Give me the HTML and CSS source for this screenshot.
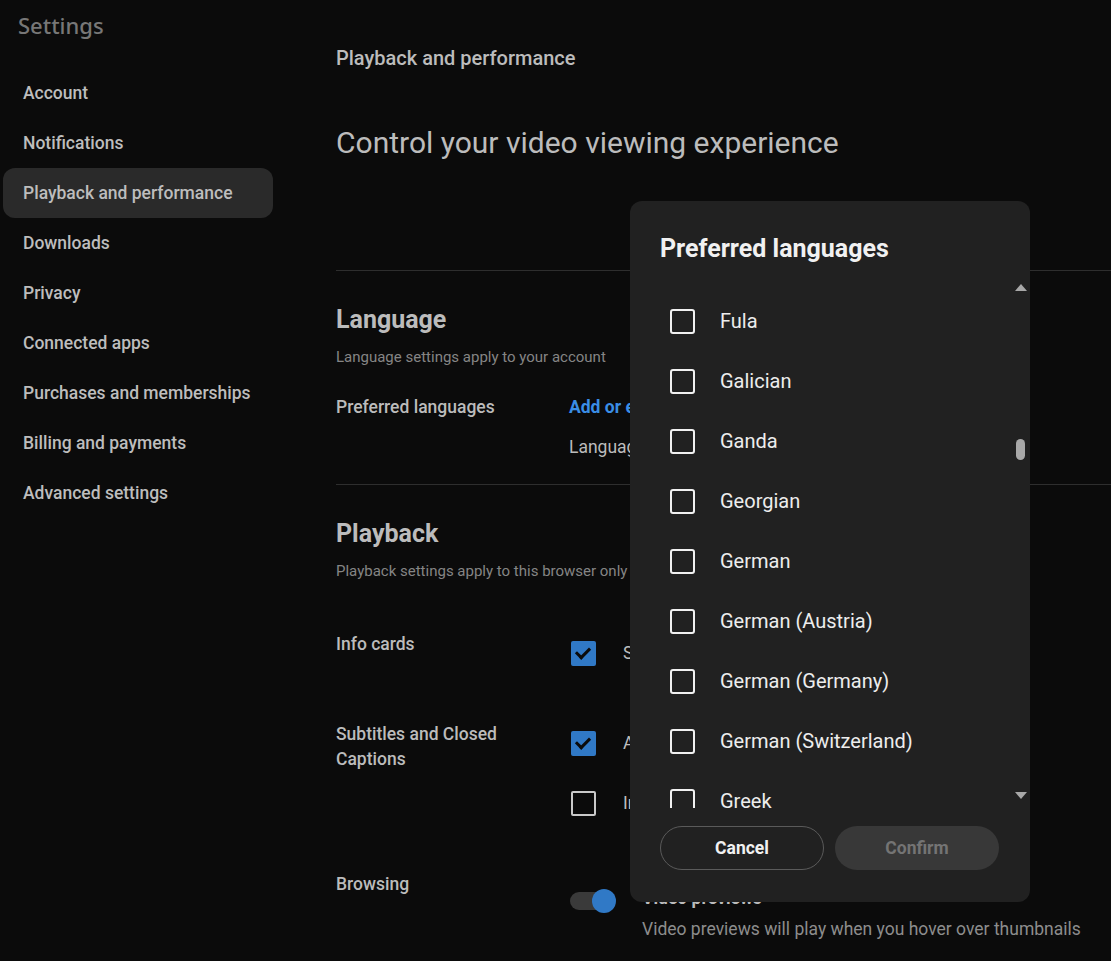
FILE: index.html
```html
<!DOCTYPE html>
<html lang="en">

<head>
  <meta charset="UTF-8">
  <meta name="viewport" content="width=device-width, initial-scale=1.0">
  <title>Settings</title>
  <link rel="stylesheet" href="styles.css">
</head>

<body>
  <div class="page">
    <div class="sidebar">
      <div class="brand">Settings</div>
      <div class="nav">
        <div class="nav-item">Account</div>
        <div class="nav-item">Notifications</div>
        <div class="nav-item active">Playback and performance</div>
        <div class="nav-item">Downloads</div>
        <div class="nav-item">Privacy</div>
        <div class="nav-item">Connected apps</div>
        <div class="nav-item">Purchases and memberships</div>
        <div class="nav-item">Billing and payments</div>
        <div class="nav-item">Advanced settings</div>
      </div>
    </div>

    <div class="main">
      <div class="page-title">Playback and performance</div>
      <div class="page-heading">Control your video viewing experience</div>

      <hr class="divider divider-top">

      <div class="section">
        <div class="section-title">Language</div>
        <div class="section-sub">Language settings apply to your account</div>
        <div class="row row-lang">
          <div class="row-label">Preferred languages</div>
          <div class="row-body">
            <div class="link">Add or edit languages</div>
            <div class="lang-value">Languages: English</div>
          </div>
        </div>
      </div>

      <hr class="divider">

      <div class="section">
        <div class="section-title">Playback</div>
        <div class="section-sub">Playback settings apply to this browser only</div>

        <div class="row row-first">
          <div class="row-label">Info cards</div>
          <div class="row-body">
            <div class="option">
              <span class="check on"></span>
              <span class="option-text">Show info cards on videos</span>
            </div>
          </div>
        </div>

        <div class="row">
          <div class="row-label">Subtitles and Closed<br>Captions</div>
          <div class="row-body">
            <div class="option">
              <span class="check on"></span>
              <span class="option-text">Always show captions</span>
            </div>
            <div class="option">
              <span class="check"></span>
              <span class="option-text">Include auto-generated captions (when available)</span>
            </div>
          </div>
        </div>

        <div class="row">
          <div class="row-label">Browsing</div>
          <div class="row-body">
            <div class="option option-toggle">
              <span class="toggle"><span class="knob"></span></span>
              <div class="option-text">
                <div class="option-title">Video previews</div>
                <div class="option-desc">Video previews will play when you hover over thumbnails</div>
              </div>
            </div>
          </div>
        </div>
      </div>
    </div>
  </div>

  <div class="dialog">
    <div class="dialog-title">Preferred languages</div>
    <div class="dialog-list-wrap">
      <div class="dialog-list">
        <div class="lang-item"><span class="box"></span>Fula</div>
        <div class="lang-item"><span class="box"></span>Galician</div>
        <div class="lang-item"><span class="box"></span>Ganda</div>
        <div class="lang-item"><span class="box"></span>Georgian</div>
        <div class="lang-item"><span class="box"></span>German</div>
        <div class="lang-item"><span class="box"></span>German (Austria)</div>
        <div class="lang-item"><span class="box"></span>German (Germany)</div>
        <div class="lang-item"><span class="box"></span>German (Switzerland)</div>
        <div class="lang-item"><span class="box"></span>Greek</div>
        <div class="lang-item"><span class="box"></span>Guarani</div>
      </div>
      <div class="scrollbar">
        <span class="arrow-up"></span>
        <div class="track"><span class="thumb"></span></div>
        <span class="arrow-down"></span>
      </div>
    </div>
    <div class="dialog-buttons">
      <button class="btn-cancel">Cancel</button>
      <button class="btn-confirm">Confirm</button>
    </div>
  </div>
</body>

</html>
```

FILE: styles.css
```css
body {
  font-family: Roboto, "Liberation Sans", Arial, sans-serif;
  margin: 0;
  padding: 0;
  background-color: #0b0b0b;
  color: #bcbcbc;
  overflow: hidden;
}

.page {
  display: flex;
  height: 961px;
}

.sidebar {
  width: 276px;
  padding-left: 3px;
  flex-shrink: 0;
}

.brand {
  font-family: "Noto Sans", sans-serif;
  font-size: 22px;
  font-weight: 500;
  color: #777777;
  line-height: 30px;
  padding: 10px 0 0 15px;
  margin-bottom: 28px;
}

.nav-item {
  width: 250px;
  height: 50px;
  line-height: 50px;
  padding-left: 20px;
  font-size: 17.5px;
  font-weight: 500;
  color: #bdbdbd;
  border-radius: 12px;
}

.nav-item.active {
  background-color: #2a2a2a;
}

.main {
  flex: 1;
  padding-left: 57px;
}

.page-title {
  font-size: 20px;
  font-weight: 500;
  line-height: 24px;
  margin-top: 46px;
}

.page-heading {
  font-size: 30px;
  line-height: 36px;
  margin-top: 55px;
}

.divider {
  border: none;
  border-top: 1px solid #2e2e2e;
  margin: 0;
}

.divider-top {
  margin-top: 109px;
}

.section-title {
  font-size: 25px;
  font-weight: 700;
  line-height: 30px;
  margin-top: 34px;
}

.section-sub {
  font-size: 15px;
  line-height: 20px;
  color: #858585;
  margin-top: 12px;
}

.row {
  display: flex;
  margin-top: 48px;
}

.row-first {
  margin-top: 51px;
}

.row-lang {
  margin-top: 28px;
  padding-bottom: 25px;
}

.row-label {
  width: 233px;
  flex-shrink: 0;
  font-size: 17.5px;
  font-weight: 500;
  line-height: 25px;
}

.row-body {
  display: flex;
  flex-direction: column;
  gap: 18px;
  font-size: 17.5px;
}

.link {
  color: #3a8ee6;
  font-weight: 700;
  line-height: 24px;
}

.lang-value {
  line-height: 24px;
  margin-top: -2px;
}

.option {
  display: flex;
  align-items: center;
  height: 42px;
  gap: 27px;
}

.option-text {
  white-space: nowrap;
}

.check {
  width: 21px;
  height: 21px;
  margin-left: 2px;
  border: 2px solid #c9c9c9;
  border-radius: 2px;
  position: relative;
}

.check.on {
  background-color: #3079c6;
  border-color: #3079c6;
}

.check.on::after {
  content: "";
  position: absolute;
  left: 3px;
  top: 2px;
  width: 11px;
  height: 6px;
  border-left: 3px solid #0b0b0b;
  border-bottom: 3px solid #0b0b0b;
  transform: translate(0px, 2px) rotate(-45deg);
}

.option-toggle {
  align-items: flex-start;
  height: auto;
  gap: 26px;
}

.toggle {
  width: 46px;
  height: 24px;
  margin-top: 17px;
  margin-left: 1px;
  position: relative;
}

.toggle::before {
  content: "";
  position: absolute;
  left: 0;
  top: 3px;
  width: 40px;
  height: 18px;
  border-radius: 9px;
  background-color: #3a3a3a;
}

.knob {
  position: absolute;
  right: 0;
  top: 0;
  width: 24px;
  height: 24px;
  border-radius: 50%;
  background-color: #3079c6;
}

.option-title {
  font-weight: 700;
  line-height: 24px;
  margin-top: 14px;
}

.option-desc {
  color: #8d8d8d;
  line-height: 24px;
  margin-top: 7px;
}

/* language picker dialog */
.dialog {
  position: absolute;
  left: 630px;
  top: 201px;
  width: 340px;
  height: 637px;
  padding: 33px 30px 31px 30px;
  background-color: #212121;
  border-radius: 12px;
  display: flex;
  flex-direction: column;
}

.dialog-title {
  font-size: 25px;
  font-weight: 700;
  line-height: 30px;
  color: #f1f1f1;
}

.dialog-list-wrap {
  display: flex;
  height: 530px;
  margin-top: 14px;
  margin-right: -29px;
}

.dialog-list {
  flex: 1;
  overflow: hidden;
  padding-top: 13px;
}

.lang-item {
  display: flex;
  align-items: center;
  height: 60px;
  font-size: 20px;
  font-weight: 400;
  color: #ededed;
}

.box {
  width: 21px;
  height: 21px;
  border: 2px solid #f1f1f1;
  border-radius: 3px;
  margin-left: 10px;
  margin-right: 25px;
}

.scrollbar {
  width: 17px;
  display: flex;
  flex-direction: column;
  align-items: center;
}

.arrow-up,
.arrow-down {
  width: 0;
  height: 0;
  border-left: 6px solid transparent;
  border-right: 6px solid transparent;
}

.arrow-up {
  border-bottom: 7px solid #a8a8a8;
  margin-top: 6px;
}

.arrow-down {
  border-top: 7px solid #a8a8a8;
  margin-bottom: 9px;
}

.track {
  flex: 1;
  width: 17px;
  display: flex;
  justify-content: center;
}

.thumb {
  width: 9px;
  height: 21px;
  margin-top: 148px;
  border-radius: 5px;
  background-color: #a8a8a8;
}

.dialog-buttons {
  display: flex;
  gap: 11px;
  margin-top: 18px;
}

.dialog-buttons button {
  width: 164px;
  height: 44px;
  border-radius: 22px;
  font-family: Roboto, sans-serif;
  font-size: 17.5px;
  font-weight: 700;
  cursor: pointer;
}

.btn-cancel {
  background-color: transparent;
  border: 1px solid #5a5a5a;
  color: #f1f1f1;
}

.btn-confirm {
  background-color: #383838;
  border: none;
  color: #747474;
}
```
